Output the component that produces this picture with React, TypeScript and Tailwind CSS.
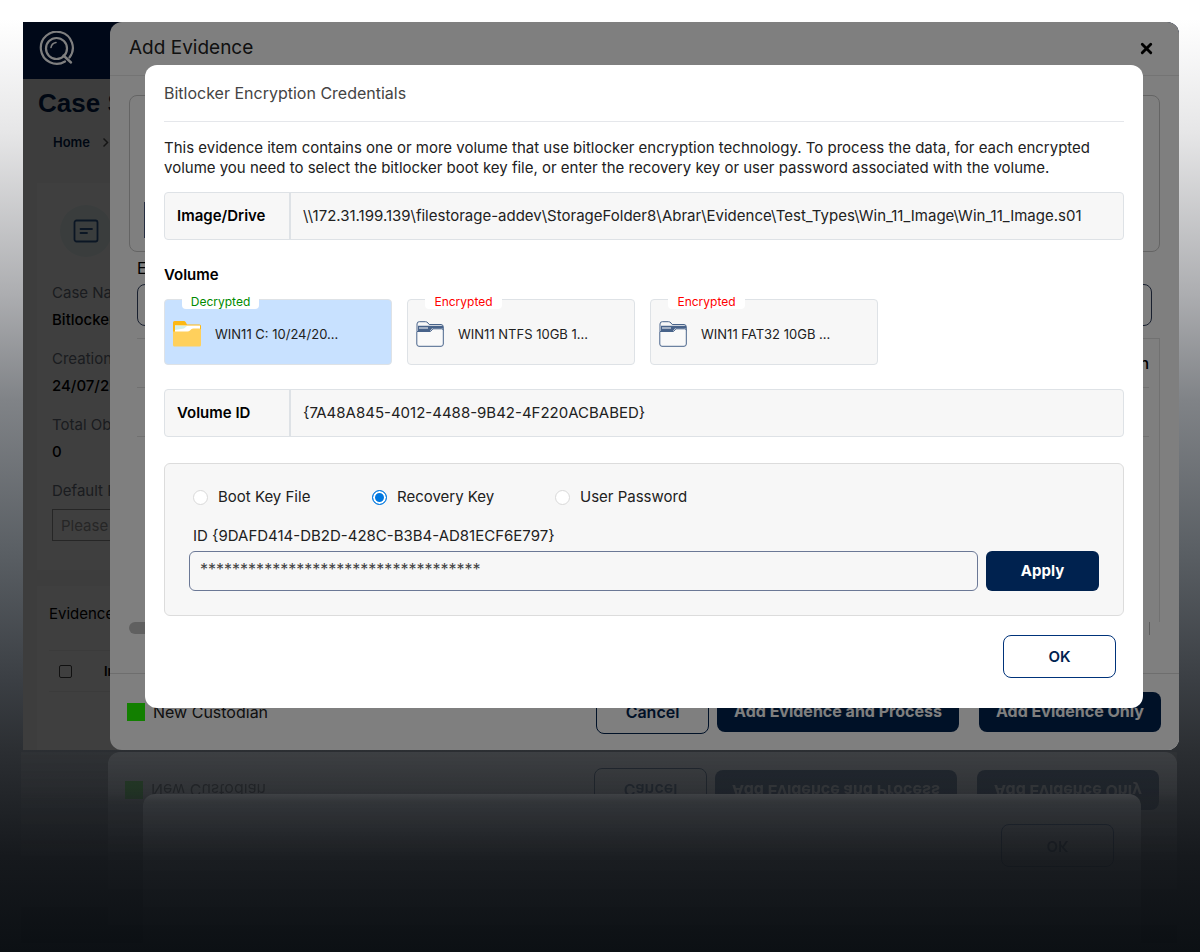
import { useId } from "react";
import { X } from "lucide-react";

const volumes = [
  { name: "WIN11 C: 10/24/20...", status: "Decrypted" },
  { name: "WIN11 NTFS 10GB 1...", status: "Encrypted" },
  { name: "WIN11 FAT32 10GB ...", status: "Encrypted" },
];

const caseFields = [
  { label: "Case Name", value: "Bitlocker" },
  { label: "Creation Date", value: "24/07/2024" },
  { label: "Total Objects", value: "0" },
];

const keyTypes = [
  { label: "Boot Key File", width: "w-[179px]" },
  { label: "Recovery Key", width: "w-[183px]" },
  { label: "User Password", width: "w-auto" },
];

const Logo = () => (
  <svg width="36" height="36" viewBox="0 0 36 36" fill="none" stroke="#fff" strokeLinecap="round">
    <path d="M26 30.500A16 16 0 1 1 30.500 26.500" strokeWidth="2.200" />
    <circle cx="17.500" cy="17.500" r="10.500" strokeWidth="2.200" />
    <path d="M12 16.500A6 6 0 0 1 17 11.500" strokeWidth="1.600" />
    <path d="M24.500 24.500L32 31.500" strokeWidth="2.400" />
  </svg>
);

const OpenFolder = () => (
  <svg width="28" height="26" viewBox="0 0 28 26">
    <path d="M0 1.500Q0 0 1.500 0H11q1 0 1.600 1L14 3.500H26.500Q28 3.500 28 5V24H0Z" fill="#fdb813" />
    <path d="M2 4.500H27V12H2Z" fill="#fff" />
    <path d="M2 4.500L14 5L11 7.500L2 9Z" fill="#d5efe8" />
    <path d="M0 10.500H14.500Q16 10.500 17 9.500L18.200 8.300Q19 7.500 20.500 7.500H26.500Q28 7.500 28 9V24Q28 25.500 26.500 25.500H1.500Q0 25.500 0 24Z" fill="#ffd05c" />
  </svg>
);

const LockedFolder = () => (
  <svg width="28" height="26" viewBox="0 0 28 26" fill="none" stroke="#48638a">
    <path d="M1 10V3Q1 .7 3.300 .7H9.500Q11 .7 12 2L13.200 3.500H25Q27.300 3.500 27.300 6V10" />
    <path d="M2 4.800H27V7.500H16L14 10H2Z" fill="#48638a" stroke="none" />
    <path d="M3 7H12" stroke="#fff" />
    <path d="M.8 10.500H14.500L17 7.800H25.500Q27.300 7.800 27.300 9.500V23Q27.300 25.300 25 25.300H3Q.8 25.300 .8 23Z" fill="#f9f9f9" />
  </svg>
);

const CasePage = () => (
  <div className="overflow-hidden bg-[#f7f7f7] text-[15px] leading-6">
    <header className="flex h-[57px] items-center bg-[#001030] pb-1 pl-4">
      <Logo />
    </header>
    <div className="relative">
      <h1 className="pt-2 pl-[15px] font-['Liberation_Sans',sans-serif] text-[26px] leading-8 font-bold text-[#001f4d]">
        Case Summary
      </h1>
      <nav className="mt-[11px] flex gap-3 pl-[30px] text-[13px] font-semibold text-[#001f4d]">
        <a href="#home">Home</a>
        <svg width="7" height="24" viewBox="0 0 7 24" fill="none" stroke="#555" strokeWidth="1.500">
          <path d="M1.500 8.500L5.500 12.500L1.500 16.500" />
        </svg>
      </nav>
      <section className="mt-[29px] ml-3.5 h-[387px] bg-white px-[15px] pt-[22px]">
        <div className="ml-2 flex size-[52px] items-center justify-center rounded-full bg-[#e9f6f6]">
          <svg width="26" height="24" viewBox="0 0 26 24" fill="none" stroke="#2f5a92" strokeWidth="1.800" strokeLinecap="round">
            <rect x="1.500" y="1.500" width="23" height="21" rx="2" />
            <path d="M7.500 10H19M7.500 14H14" />
          </svg>
        </div>
        <dl className="mt-[24px]">
          {caseFields.map((field) => (
            <div key={field.label} className="mb-[15px]">
              <dt className="text-[#6b7280]">{field.label}</dt>
              <dd className="mt-[3px] font-medium text-black">{field.value}</dd>
            </div>
          ))}
        </dl>
        <label className="block text-[#6b7280]">
          Default Processing
          <input
            placeholder="Please select"
            className="mt-1.5 block h-8 w-60 border border-[#999] px-2 placeholder:text-[#9a9a9a]"
          />
        </label>
      </section>
      <section className="mt-4 ml-3.5 h-80 bg-white px-3 pt-4">
        <h2>Evidence</h2>
        <div className="mt-6 flex h-[42px] items-center border-y border-[#ececec] pl-2.5">
          <input type="checkbox" aria-label="Select all" className="size-[13px] appearance-none rounded-xs border border-[#444]" />
          <span className="ml-8 text-[13px] font-semibold">Index</span>
        </div>
      </section>
      <div className="absolute inset-0 bg-black/50" />
    </div>
  </div>
);

const EvidenceFooter = () => (
  <footer className="flex h-[77px] w-full items-center border-t border-[#dcdcdc] pr-[18px] pl-[17px] text-[16px] text-[#222]">
    <span className="mr-2 size-[18px] bg-[#24ff00]" />
    <span>New Custodian</span>
    <button className="ml-auto h-11 w-[113px] rounded-lg border border-[#00224f] font-semibold text-[#00224f]">Cancel</button>
    <button className="ml-2 h-10 w-[242px] rounded-lg bg-[#00224f] pb-0.5 font-bold text-white">Add Evidence and Process</button>
    <button className="ml-5 h-10 w-[182px] rounded-lg bg-[#00224f] pb-0.5 font-bold text-white">Add Evidence Only</button>
  </footer>
);

const AddEvidence = () => (
  <div className="ml-[87px] flex flex-col rounded-xl bg-white text-[16px]">
    <header className="flex h-[54px] items-center justify-between border-b border-[#e8e8e8] pr-6 pl-[19px]">
      <h2 className="text-[19px] text-[#222]">Add Evidence</h2>
      <button aria-label="Close">
        <X size={17} strokeWidth={4} />
      </button>
    </header>
    <div className="flex flex-1 flex-col px-[19px] pt-[19px]">
      <div className="h-[157px] rounded-lg border border-[#c8c8c8] pt-[106px] pr-8 pl-3.5">
        <div className="h-9 border border-[#4a5a80]" />
      </div>
      <p className="mt-1 pl-2">Evidence</p>
      <input aria-label="Evidence" className="mx-2 mt-1 h-[42px] rounded-lg border border-[#33415f]" />
      <div className="mt-3 ml-2 border-t border-r border-[#e2e2e2]">
        <div className="mr-2.5 flex h-[49px] items-center justify-end border-b border-[#e2e2e2] font-medium">Action</div>
        <div className="mr-2.5 h-[49px] border-b border-[#e2e2e2]" />
        <div className="h-[185px]" />
      </div>
      <div className="mr-2.5 h-[13px] border-r border-[#bbb] pr-3">
        <div className="h-3 rounded-full bg-[#c1c1c1]" />
      </div>
    </div>
    <EvidenceFooter />
  </div>
);

const OkButton = () => (
  <div className="flex justify-end pr-2 text-[15px]">
    <button className="h-[43px] w-[113px] rounded-lg border border-[#00337a] font-semibold text-[#00224f]">OK</button>
  </div>
);

const InfoRow = ({ label, value }: { label: string; value: string }) => (
  <div className="flex h-12 items-center rounded border border-[#dee2e6] bg-[#f7f7f7]">
    <span className="flex h-full w-[126px] items-center border-r-2 border-[#dee2e6] pl-3 font-semibold text-black">
      {label}
    </span>
    <span className="pl-3">{value}</span>
  </div>
);

const Credentials = () => {
  const id = useId();

  return (
    <div className="z-10 col-start-1 row-start-1 mt-[43px] mr-9 mb-[42px] ml-[122px] rounded-xl bg-white px-[19px] pb-[30px] text-[15px] leading-5 text-[#212121]">
      <h2 className="border-b border-[#e5e7eb] pt-4 pb-4 text-[16px] leading-6 text-[#444]">
        Bitlocker Encryption Credentials
      </h2>
      <p className="mt-4 mb-3.5">
        This evidence item contains one or more volume that use bitlocker encryption technology. To process the data,
        for each encrypted volume you need to select the bitlocker boot key file, or enter the recovery key or user
        password associated with the volume.
      </p>
      <InfoRow label="Image/Drive" value="\\172.31.199.139\filestorage-addev\StorageFolder8\Abrar\Evidence\Test_Types\Win_11_Image\Win_11_Image.s01" />
      <h3 className="mt-[25px] mb-3.5 font-semibold text-black">Volume</h3>
      <div className="flex gap-[15px]">
        {volumes.map((volume) => {
          const decrypted = volume.status === "Decrypted";
          return (
            <button
              key={volume.name}
              className={`relative flex h-[66px] w-[228px] items-center gap-3.5 rounded border border-[#dee2e6] px-2 pt-1 text-left text-[13px] ${decrypted ? "bg-[#c8e1ff]" : "bg-[#f7f7f7]"}`}
            >
              <span
                className={`absolute -top-[5px] left-[17px] w-[77px] rounded bg-white text-center text-[12px] leading-[14px] ${decrypted ? "text-[#008a00]" : "text-[#f00]"}`}
              >
                {volume.status}
              </span>
              {decrypted ? <OpenFolder /> : <LockedFolder />}
              {volume.name}
            </button>
          );
        })}
      </div>
      <div className="mt-6">
        <InfoRow label="Volume ID" value="{7A48A845-4012-4488-9B42-4F220ACBABED}" />
      </div>
      <div className="mt-[26px] rounded-md border border-[#dcdcdc] bg-[#f7f7f7] px-6 pt-[23px] pb-6">
        <div className="flex">
          {keyTypes.map((type) => (
            <label key={type.label} className={`flex items-center gap-2.5 pl-1 ${type.width}`}>
              <input
                type="radio"
                name={id}
                defaultChecked={type.label === "Recovery Key"}
                className="size-[15px] appearance-none rounded-full border border-[#d9d9d9] bg-white checked:border-[#0078e0] checked:bg-[#0078e0] checked:shadow-[inset_0_0_0_2px_white]"
              />
              {type.label}
            </label>
          ))}
        </div>
        <label htmlFor={`${id}-key`} className="mt-[19px] block pl-1">
          ID {"{9DAFD414-DB2D-428C-B3B4-AD81ECF6E797}"}
        </label>
        <div className="mt-[5px] flex gap-2">
          <input
            id={`${id}-key`}
            defaultValue="***********************************"
            className="h-10 min-w-0 flex-1 rounded-md border border-[#6b7896] px-2.5 pb-1 text-[16px] text-[#444]"
          />
          <button className="h-10 w-[113px] rounded-md bg-[#00224f] font-bold text-white">Apply</button>
        </div>
      </div>
      <div className="mt-[19px]">
        <OkButton />
      </div>
    </div>
  );
};

const Reflection = () => (
  <div className="grid h-full -scale-y-100 grid-cols-1 grid-rows-1 *:col-start-1 *:row-start-1">
    <div className="bg-[#7f7f7f]" />
    <div className="ml-[87px] flex items-end rounded-b-xl bg-white">
      <EvidenceFooter />
    </div>
    <div className="bg-black/50" />
    <div className="mr-9 mb-[42px] ml-[122px] flex flex-col justify-end rounded-b-xl bg-white px-[19px] pb-[30px]">
      <OkButton />
    </div>
  </div>
);

const App = () => (
  <main className="flex h-screen flex-col overflow-hidden bg-[linear-gradient(to_bottom,#fff_2%,#e6e6e7_14%,#acadb0_31%,#808387_42%,#5a5f64_58%,#3c4045_71%,#2b2e32_79%,#16191d_90%,#0c1014_100%)] pt-[22px] font-['Inter',sans-serif]">
    <div className="mr-[21px] ml-[23px] grid shrink-0 grid-cols-1 overflow-hidden rounded-r-xl">
      <div className="col-start-1 row-start-1 h-0 min-h-full overflow-hidden">
        <CasePage />
      </div>
      <div className="z-0 col-start-1 row-start-1 grid">
        <AddEvidence />
      </div>
      <div className="z-0 col-start-1 row-start-1 bg-black/50" />
      <Credentials />
    </div>
    {/* Mirror image on the floor */}
    <div
      inert
      aria-hidden="true"
      className="mt-0.5 min-h-0 flex-1 overflow-hidden pr-[23px] pl-[21px] [mask-image:linear-gradient(to_bottom,rgb(0_0_0/0.22),rgb(0_0_0/0.14)_40px,rgb(0_0_0/0.08)_50px,rgb(0_0_0/0.02)_110px,transparent_200px)]"
    >
      <Reflection />
    </div>
  </main>
);

export default App;
